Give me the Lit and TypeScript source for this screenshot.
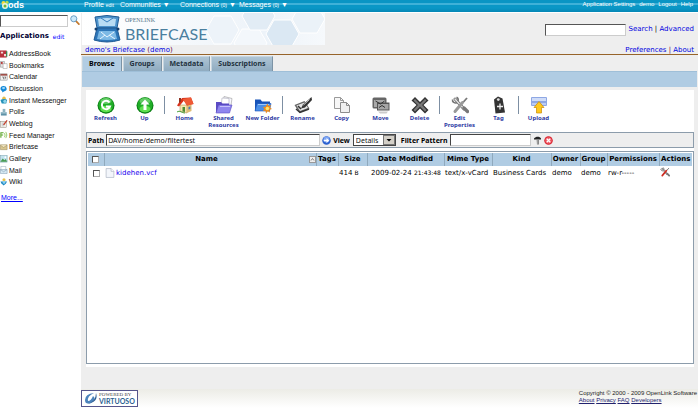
import { LitElement, html, css, svg, TemplateResult } from "lit";
import { customElement } from "lit/decorators.js";

type Art = TemplateResult;

const icon = (art: Art, size = 18, box = 18) =>
  html`<svg width=${size} height=${size} viewBox="0 0 ${box} ${box}" aria-hidden="true">${art}</svg>`;

const greenDisc = svg`
  <ellipse cx="9" cy="9.500" rx="8.500" ry="8.300" fill="#0b7d14"/>
  <circle cx="9" cy="9" r="7.600" fill="#1fae26"/>
  <ellipse cx="9" cy="13" rx="5.500" ry="3.200" fill="#5fe04f"/>
  <ellipse cx="9" cy="5" rx="5.500" ry="3" fill="#7fd780" opacity=".7"/>`;

const folderArt = (dark: string, light: string) => svg`
  <path d="M1 3.500h5.500l1.500 2h8v9.500H1z" fill="${dark}"/>
  <path d="M1 15L3 7.500h14L15.500 15z" fill="${light}" stroke="${dark}" stroke-width=".6"/>`;

const wrenchArt = (handle: string) => svg`
  <path d="M4 3l9 10" stroke="#666" stroke-width="3" stroke-linecap="round"/>
  <path d="M4 3l9 10" stroke="#e4e4e4" stroke-width="1.500" stroke-linecap="round"/>
  <path d="M1.500 3.500a3 3 0 0 0 4.500 3M5.500 1.200a3 3 0 0 1 1.500 4" fill="none" stroke="#777" stroke-width="1.600"/>
  <path d="M16 2l-4 4.500" stroke="#777" stroke-width="1.800"/>
  <path d="M11.500 6.500L4 15.500" stroke="${handle}" stroke-width="3" stroke-linecap="round"/>
  <path d="M13 12l3.500 3.500" stroke="#777" stroke-width="3.400" stroke-linecap="round"/>`;

const art: Record<string, Art> = {
  refresh: svg`${greenDisc}<path d="M12.500 6.500A4.200 4.200 0 1 0 13 10.500H9" fill="none" stroke="#fff" stroke-width="2"/>`,
  up: svg`${greenDisc}<path d="M9 3.500l4.500 5h-3v5.500H7.500V8.500h-3z" fill="#fff"/>`,
  home: svg`
    <path d="M4 9v6.500l7 1.500V9z" fill="#f7e6b0" stroke="#a57b3c" stroke-width=".5"/>
    <path d="M11 9v8l4.500-2V8.500z" fill="#e0bd74"/>
    <path d="M1 9.500L6 2l9-.5 2.500 6.500-6.500 1.500-3-5-5 6z" fill="#d8311b"/>
    <path d="M6.500 3l4.500 6.500 6.500-1.500L15 1.500z" fill="#ef5a35"/>
    <path d="M6.500 11h2.500v5l-2.500-.5z" fill="#4d8b35"/><path d="M12.500 11l1.800-.5v2.500l-1.800.6z" fill="#4c79b8"/>
    <path d="M3 2h2v3.500L3 7z" fill="#8d3222"/><path d="M1 16c3-2 5 1 8 1" fill="none" stroke="#4aa23c"/>`,
  shared: svg`
    <path d="M9 .5l8 2-1.500 10-8-2z" fill="#f8f8ff" stroke="#999" stroke-width=".6"/>
    <path d="M7 2l7 .5v9H6z" fill="#fff" stroke="#aab" stroke-width=".6"/>
    <path d="M1 6h5l1.500 1.500H14V16H1z" fill="#5b4bc4"/>
    <path d="M1 17L3.500 9H17l-2.500 8z" fill="#8f86ee" stroke="#5b4bc4" stroke-width=".6"/><path d="M5 10.500h10" stroke="#c6c2fb"/>`,
  newFolder: svg`
    ${folderArt("#1753b8", "#4a8fe8")}<path d="M4 8.500h11" stroke="#9cc7f8"/>
    <path d="M13.500 7.500l1 2.500 2.500-1-1 2.500 2 1.500-2.500.8.5 2.700-2.300-1.300-1.700 2.300-.5-2.700-2.600.2 1.600-2.200-1.800-1.800 2.600-.2z" fill="#f08c1c"/>
    <circle cx="13.400" cy="12.500" r="1.800" fill="#ffe56a"/>`,
  rename: svg`
    <path d="M.5 9l10-4 5 7.500-10 4.500z" fill="#666"/><path d="M2.500 9.500l8-3 3.500 5.500-8 3z" fill="#e4e4e4"/>
    <path d="M17.500 1L9 8.500l-2 4 4-1L18 4z" fill="#333"/><path d="M15.500 3.500l-6 5.500" stroke="#ccc"/>
    <path d="M4 10l3 3M2 13l4 3.500 9-3.500" fill="none" stroke="#333" stroke-width="1.500"/>`,
  copy: svg`
    <path d="M1.500 1.500h6l3 3v8h-9z" fill="#f7f7f7" stroke="#9a9a9a"/><path d="M7.500 1.500v3h3" fill="none" stroke="#9a9a9a"/>
    <path d="M7.500 6.500h6l3 3v7h-9z" fill="#f0f0f0" stroke="#8c8c8c"/><path d="M13.500 6.500v3h3" fill="none" stroke="#8c8c8c"/>`,
  move: svg`
    <rect x=".5" y="1.500" width="14" height="11" rx="1.500" fill="#666"/><path d="M2 4h11v7H2z" fill="#aaa"/>
    <path d="M5 6.500h12.500v8H5z" fill="#555"/><path d="M6 8h10.500v5.500H6z" fill="#a5a5a5"/>
    <path d="M3.500 5l5 3 4-3M7 11.500l3-2 3 2" fill="none" stroke="#333"/><path d="M6 15.500h10l-1.500 2H8z" fill="#ccc"/>`,
  delete: svg`
    <path d="M4 1L9 6l5-5 3.500 3.500L12.500 9l5 5-3.500 3.500-5-5-5 5L.500 14l5-5-5-4.500z" fill="#333"/>
    <path d="M4 3l5 5 5-5 1.500 1.500L11 9l4.500 5-1.500 1.500-5-5-5 5L2.500 14 7 9 2.500 4.500z" fill="#777"/>`,
  edit: wrenchArt("#999"),
  tag: svg`
    <path d="M4 3.500L8 .5l4.500 2L15 16.500l-9.500 1z" fill="#333"/><circle cx="8.300" cy="3.600" r="1.400" fill="#ddd"/>
    <path d="M10 7.500v6M7 10.500h6" stroke="#eee" stroke-width="1.300"/>`,
  upload: svg`
    <rect x="1" y="1" width="16" height="9" rx="1" fill="#8ea7e4"/><rect x="2" y="2" width="14" height="3" fill="#cfdcf8"/>
    <path d="M2 8h14" stroke="#e8efff"/><path d="M9 5.500l5 6h-2.500V17h-5v-5.500H4z" fill="#ffc91c" stroke="#c98a06" stroke-width=".7"/>`,
  tools: wrenchArt("#cc2d22"),
  sheet: svg`<path d="M2 1h9l5 5v11H2z" fill="#f3f6fb" stroke="#9ba5b5"/><path d="M11 1v5h5" fill="#fff" stroke="#9ba5b5"/>`,
  go: svg`<circle cx="9" cy="9" r="8.500" fill="#2d62d0"/><circle cx="9" cy="7" r="6" fill="#7ea6f3"/>
    <path d="M3.500 7.500H9V4l5.500 5L9 14v-3.500H3.500z" fill="#fff"/>`,
  funnel: svg`<path d="M2 5c4-5 12-4 14 0v2H2z" fill="#222"/><path d="M7 7h5v10H8z" fill="#888"/><path d="M8 8v8" stroke="#ddd"/>`,
  cancel: svg`<circle cx="9" cy="9" r="8.500" fill="#d71c28"/><circle cx="9" cy="9" r="6.500" fill="#f0606a"/>
    <path d="M5.500 5.500l7 7M12.500 5.500l-7 7" stroke="#fff" stroke-width="2.600"/>`,
  lens: svg`<path d="M10.500 10.500L16 16.500" stroke="#c47a2e" stroke-width="3" stroke-linecap="round"/>
    <circle cx="6.800" cy="6.800" r="5.500" fill="#cdeafb" stroke="#5b93bd" stroke-width="1.600"/>`,
  AddressBook: svg`<rect width="15" height="16" y="1" fill="#b8323a"/><path d="M2 4h5v4H2zM9 9h5v5H9z" fill="#f3dada"/><path d="M15 3v12" stroke="#3b8b52" stroke-width="3"/>`,
  Bookmarks: svg`<path d="M1 1h9v13H1z" fill="#e4e4e4" stroke="#777"/><path d="M7 6h9v11H7z" fill="#fff" stroke="#888"/><path d="M2 2h4v6L4 6 2 8z" fill="#b83a3a"/>`,
  Calendar: svg`<rect x="1" y="2" width="15" height="14" fill="#f2f2f2" stroke="#777"/><path d="M1 2h15v4H1z" fill="#a0504a"/><path d="M5 9h3v5M10 9h3l-2 5" fill="none" stroke="#555" stroke-width="1.500"/>`,
  Discussion: svg`<path d="M1 8a7 6 0 1 1 9 6l-5 3v-3A7 6 0 0 1 1 8z" fill="#1389d8"/><ellipse cx="8" cy="7" rx="3.500" ry="2.500" fill="#9fd7fa"/>`,
  "Instant Messenger": svg`<circle cx="9" cy="5" r="4" fill="#e6bd4a"/><path d="M1 9c4-3 12-3 15 0l-2 8H4z" fill="#2491b9"/><circle cx="11" cy="12" r="3.500" fill="#8fd5ea"/>`,
  Polls: svg`<path d="M2 9h13v8H2z" fill="#5f93a8"/><path d="M6 2h6v8H6z" fill="#8db3c1"/><path d="M1 11h15" stroke="#c5dde5" stroke-width="2"/>`,
  Weblog: svg`<rect x="1" y="3" width="13" height="14" fill="#f1eee6" stroke="#857f72"/><path d="M4 7h7M4 10h7M4 13h5" stroke="#8aa0b8"/><path d="M16 1L8 11" stroke="#c8432e" stroke-width="3"/>`,
  "Feed Manager": svg`<path d="M2 15V4h6M2 9h5" fill="none" stroke="#5aa52c" stroke-width="2.500"/><path d="M10 5q3 4 0 9M13 2q5 7 0 14" fill="none" stroke="#82c24d" stroke-width="1.800"/>`,
  Briefcase: svg`<path d="M1 4h15v11H1z" fill="#d8c690" stroke="#8b7844"/><path d="M1 5l7 5 8-5" fill="#f2e9c8" stroke="#8b7844"/>`,
  Gallery: svg`<rect x="1" y="1" width="15" height="15" fill="#c2e2ee" stroke="#6e98a6"/><path d="M1 15l5-7 4 4 3-3 3 6z" fill="#4a9b52"/><circle cx="12" cy="5" r="2" fill="#fff"/>`,
  Mail: svg`<path d="M2 1h11v9H2z" fill="#fff" stroke="#7e9bb0"/><path d="M1 8h15v9H1z" fill="#d6e8f2" stroke="#6c8ca3"/><path d="M1 8l7 5 8-5" fill="none" stroke="#6c8ca3"/>`,
  Wiki: svg`<circle cx="9" cy="4" r="3.500" fill="#e7bf4c"/><path d="M1 8h15l-3 5-5 4-5-5z" fill="#1e88c1"/><circle cx="9" cy="10" r="3" fill="#8bd0f1"/>`,
};

const apps = [
  "AddressBook", "Bookmarks", "Calendar", "Discussion", "Instant Messenger", "Polls",
  "Weblog", "Feed Manager", "Briefcase", "Gallery", "Mail", "Wiki",
];

const tools: [string, string][][] = [
  [["refresh", "Refresh"], ["up", "Up"]],
  [["home", "Home"], ["shared", "Shared Resources"], ["newFolder", "New Folder"]],
  [["rename", "Rename"], ["copy", "Copy"], ["move", "Move"], ["delete", "Delete"]],
  [["edit", "Edit Properties"], ["tag", "Tag"]],
  [["upload", "Upload"]],
];

@customElement("app-topbar")
class AppTopbar extends LitElement {
  static styles = css`
    :host {
      display: flex; align-items: flex-start; height: 12px; color: #fff;
      font: 7px/9px "Liberation Sans", Arial, sans-serif;
      background: linear-gradient(#0a95c4 0 3px, #3fb1d8 3px 5px, #0a97c6 5px 8px, #0587b6 12px);
    }
    a { color: inherit; text-decoration: none; }
    .brand { width: 84px; height: 11px; flex: none; }
    .brand svg { display: block; }
    .menu { display: flex; flex: 1; }
    .item { white-space: nowrap; }
    .first { width: 36px; }
    .second { width: 60px; }
    .third { width: 59px; }
    .small { font-size: 5px; }
    .right { display: flex; gap: 4px; font-size: 6px; padding-right: 5px; }
  `;
  render() {
    return html`
      <a class="brand" href="#" aria-label="ods">
        <svg width="26" height="11" viewBox="0 0 26 11">
          <circle cx="3.500" cy="3" r="2" fill="#f5dc3c"/><circle cx="7" cy="2.300" r="1.600" fill="#b8dc4e"/>
          <circle cx="5" cy="6" r="3" fill="#e9f4e0"/><circle cx="5" cy="6" r="1.500" fill="#6fb63c"/>
          <text x="8" y="8" font-family="Liberation Sans, sans-serif" font-weight="bold" font-size="9" fill="#fff">ods</text>
        </svg>
      </a>
      <nav class="menu">
        <span class="item first"><a href="#">Profile</a> <a class="small" href="#">edit</a></span>
        <a class="item second" href="#">Communities ▼</a>
        <a class="item third" href="#">Connections <span class="small">(0)</span> ▼</a>
        <a class="item" href="#">Messages <span class="small">(0)</span> ▼</a>
      </nav>
      <nav class="right">
        <a href="#">Application Settings</a><a href="#">demo</a><a href="#">Logout</a><a href="#">Help</a>
      </nav>`;
  }
}

@customElement("app-sidebar")
class AppSidebar extends LitElement {
  static styles = css`
    :host { display: block; width: 80px; flex: none; font: 7px/9px "Liberation Sans", Arial, sans-serif; }
    a { color: #00f; }
    svg { display: block; }
    .search { display: flex; align-items: flex-start; gap: 2px; padding-top: 3px; }
    .search input {
      width: 68px; height: 12px; box-sizing: border-box; padding: 0 1px; font: inherit;
      border: 1px solid; border-color: #555 #ccc #ccc #555; border-radius: 0; background: #fff;
    }
    .search button { padding: 0; border: 0; background: none; }
    .title { display: flex; gap: 4px; margin: 4px 0 0; font: bold 7px/11px "DejaVu Sans", Verdana, sans-serif; color: #003; }
    .title a { font-size: 6px; text-decoration: none; font-weight: normal; }
    .apps { list-style: none; margin: 7px 0 4px; padding: 0; display: grid; grid-auto-rows: 1fr; height: 140px; }
    .apps a { display: flex; align-items: center; gap: 1px; color: #111; text-decoration: none; }
    .more { margin-left: 1px; }
  `;
  render() {
    return html`
      <form class="search" role="search">
        <input type="text" aria-label="Search applications" />
        <button type="button" aria-label="Search">${icon(art.lens, 10)}</button>
      </form>
      <h2 class="title">Applications <a href="#">edit</a></h2>
      <ul class="apps">
        ${apps.map((name) => html`<li><a href="#">${icon(art[name], 8)}<span>${name}</span></a></li>`)}
      </ul>
      <a class="more" href="#">More...</a>`;
  }
}

@customElement("app-banner")
class AppBanner extends LitElement {
  static styles = css`
    :host { display: block; font: 7px/9px "DejaVu Sans", Verdana, sans-serif; border-bottom: 1px solid #96632a; }
    a { color: #0000e0; text-decoration: none; }
    .row { display: flex; justify-content: space-between; }
    .logo { display: block; margin-left: 1px; }
    .search { display: flex; align-items: center; gap: 3px; height: 33px; padding-right: 4px; }
    .search input {
      width: 81px; height: 12px; box-sizing: border-box; font: inherit; padding: 0 1px;
      border: 1px solid; border-color: #555 #ccc #ccc #555; border-radius: 0; background: #fff;
    }
    .crumbs { height: 8px; padding: 0 4px 0 4px; color: #604; line-height: 8px; }
  `;
  render() {
    const hex = (x: number, y: number, fill: string) =>
      svg`<path d="M${x} ${y}l8-14h17l8 14-8 14h-17z" fill="${fill}" stroke="#fff"/>`;
    return html`
      <div class="row">
        <svg class="logo" width="243" height="32" viewBox="0 0 243 32" role="img" aria-label="OpenLink Briefcase">
          <defs>
            <linearGradient id="fade"><stop offset="0" stop-color="#fff"/><stop offset=".75" stop-color="#edf3f9"/><stop offset="1" stop-color="#f6f9fc"/></linearGradient>
          </defs>
          <rect width="243" height="32" fill="url(#fade)"/>
          ${hex(124, 17, "#edf3f9")}${hex(152, 30, "#f3f7fb")}${hex(160, 3, "#e2ecf5")}${hex(184, 21, "#dbe8f3")}${hex(210, 6, "#ebf2f8")}
          <path d="M13 4q12-3 24 0l-2 11H15z" fill="#4d93cc" stroke="#1f5a94"/>
          <path d="M16 6q9-2 18 0l-1 7H17z" fill="#b8dcf4"/>
          <path d="M15 15h20l3 12q-13 4-26 0z" fill="#2d76b8" stroke="#1f5a94"/>
          <path d="M17 18h16l2 8q-10 2-20 0z" fill="#7db9e5"/>
          <path d="M19 19l6 5 7-5M18 26l5-4M33 26l-6-4" fill="none" stroke="#e8f5ff"/>
          <path d="M19 5l6 4 6-4" fill="none" stroke="#3a7fbd"/>
          <circle cx="14" cy="16" r="1.500" fill="#123f70"/><circle cx="36" cy="16" r="1.500" fill="#123f70"/>
          <text x="43" y="9" font-family="Liberation Serif, serif" font-size="6" fill="#55738b">OPENLINK</text>
          <text x="43" y="27" font-family="Lato, sans-serif" font-size="16" fill="#4a7f9f">BRIEFCASE</text>
        </svg>
        <form class="search" role="search">
          <input type="text" aria-label="Search" />
          <span><a href="#">Search</a> | <a href="#">Advanced</a></span>
        </form>
      </div>
      <div class="row crumbs">
        <span><a href="#">demo's Briefcase</a> (<a href="#">demo</a>)</span>
        <span><a href="#">Preferences</a> | <a href="#">About</a></span>
      </div>`;
  }
}

@customElement("app-files")
class AppFiles extends LitElement {
  static styles = css`
    :host { display: flex; flex-direction: column; flex: 1; margin: 1px 1px 0; font: 7px/9px "DejaVu Sans", Verdana, sans-serif; }
    svg { display: block; }
    button { font: inherit; padding: 0; border: 0; background: none; }
    .tabs { display: flex; gap: 1px; border-bottom: 1px solid #9fbfd8; }
    .tab {
      height: 15px; padding: 0 6px; font: bold 7px/14px "Noto Sans", sans-serif; color: #24333f;
      background: linear-gradient(#aec4d4, #8fabc0); border: 1px solid; border-color: #c5d5e0 #7c93a5 #8fabc0 #c5d5e0;
      border-bottom: 0;
    }
    .tab.on { background: #b2cde3; color: #000; }
    .strip { height: 15px; background: #b0cce3; }
    .panel { display: flex; flex-direction: column; flex: 1; margin: 3px 3px 0 4px; background: #fff; padding: 6px 0 3px; }
    .toolbar { display: flex; height: 36px; }
    .group { display: flex; }
    .group + .group { border-left: 1px solid #8494a6; border-image: linear-gradient(#7d8fa3 0 18px, transparent 18px) 1; }
    .tool {
      display: flex; flex-direction: column; align-items: center; gap: 1px; width: 39px;
      font: bold 6px/7px "Noto Sans", sans-serif; color: #2c3aa4;
    }
    .pathbar {
      display: flex; align-items: center; gap: 2px; height: 16px; box-sizing: border-box; padding: 0 1px;
      border: 1px solid #8c9cab; background: #eee; font: 7px/9px "Noto Sans", sans-serif;
    }
    .pathbar label { font-weight: bold; white-space: nowrap; }
    .pathbar input, .pathbar select {
      height: 12px; box-sizing: border-box; border: 1px solid; border-color: #444 #ccc #ccc #444;
      border-radius: 0; font: inherit; padding: 0 1px; background: #fff; color: #111; margin: 0;
    }
    .path { width: 214px; }
    .pattern { width: 81px; }
    .pick { position: relative; margin: 0 3px 0 1px; }
    .pick select { appearance: none; display: block; width: 43px; padding: 0 2px; border-color: #444; }
    .pick svg { position: absolute; right: 1px; top: 1px; pointer-events: none; }
    .list { flex: 1; margin-top: 3px; border: 1px solid #8c9cab; padding: 1px; }
    table { width: 100%; table-layout: fixed; border-collapse: collapse; }
    th, td { padding: 0; height: 13px; white-space: nowrap; }
    th { background: #b0cce3; border-right: 1px solid #8fa9bd; text-align: center; }
    th:last-child { border-right: 0; }
    td { height: 14px; padding-left: 1px; }
    td a { color: #1a00ee; text-decoration: none; }
    .file { display: flex; align-items: center; gap: 1px; }
    .head { display: flex; align-items: center; }
    .head span { flex: 1; }
    .sort { width: 7px; height: 7px; background: #eee; border: 1px solid #999; box-sizing: border-box; }
    .tiny { font-size: 6px; }
    .center { text-align: center; }
    input[type="checkbox"] {
      appearance: none; display: block; margin: 0 auto; width: 7px; height: 7px; background: #fff;
      border: 1px solid; border-color: #555 #aaa #aaa #555;
    }
    .c-check { width: 16px; } .c-tags { width: 22px; } .c-size { width: 29px; } .c-date { width: 77px; }
    .c-mime { width: 48px; } .c-kind { width: 59px; } .c-owner { width: 29px; } .c-group { width: 27px; }
    .c-perm { width: 52px; } .c-act { width: 33px; }
  `;
  render() {
    return html`
      <nav class="tabs">
        ${["Browse", "Groups", "Metadata", "Subscriptions"].map(
          (t, i) => html`<button class="tab ${i === 0 ? "on" : ""}">${t}</button>`,
        )}
      </nav>
      <div class="strip"></div>
      <div class="panel">
        <div class="toolbar">
          ${tools.map(
            (g) => html`<div class="group">
              ${g.map(([key, label]) => html`<button class="tool">${icon(art[key], 18)}<span>${label}</span></button>`)}
            </div>`,
          )}
        </div>
        <form class="pathbar">
          <label for="path">Path</label>
          <input class="path" id="path" type="text" .value=${"DAV/home/demo/filtertest"} />
          <button type="button" aria-label="Go">${icon(art.go, 9)}</button>
          <label for="view">View</label>
          <span class="pick">
            <select id="view"><option>Details</option></select>
            <svg width="12" height="10" viewBox="0 0 12 10" aria-hidden="true">
              <rect x=".5" y=".5" width="11" height="9" fill="#d4d0c8" stroke="#777"/><path d="M3.500 4h5L6 6.500z"/>
            </svg>
          </span>
          <label for="pattern">Filter Pattern</label>
          <input class="pattern" id="pattern" type="text" />
          <button type="button" aria-label="Filter">${icon(art.funnel, 9)}</button>
          <button type="button" aria-label="Clear filter">${icon(art.cancel, 9)}</button>
        </form>
        <div class="list">
          <table>
            <colgroup>
              <col class="c-check" /><col /><col class="c-tags" /><col class="c-size" /><col class="c-date" /><col class="c-mime" />
              <col class="c-kind" /><col class="c-owner" /><col class="c-group" /><col class="c-perm" /><col class="c-act" />
            </colgroup>
            <thead>
              <tr>
                <th><input type="checkbox" aria-label="Select all" /></th>
                <th><div class="head"><span>Name</span>
                  <button class="sort" aria-label="Sort by name"><svg width="5" height="5" viewBox="0 0 5 5"><path d="M1 3.500L2.500 1.500 4 3.500" fill="none" stroke="#666" stroke-width=".8"/></svg></button></div></th>
                ${["Tags", "Size", "Date Modified", "Mime Type", "Kind", "Owner", "Group", "Permissions", "Actions"].map(
                  (h) => html`<th>${h}</th>`,
                )}
              </tr>
            </thead>
            <tbody>
              <tr>
                <td><input type="checkbox" aria-label="Select kidehen.vcf" /></td>
                <td><a class="file" href="#">${icon(art.sheet, 10)}kidehen.vcf</a></td>
                <td></td>
                <td>414 <span class="tiny">B</span></td>
                <td class="center">2009-02-24 <span class="tiny">21:43:48</span></td>
                <td>text/x-vCard</td>
                <td>Business Cards</td>
                <td>demo</td>
                <td>demo</td>
                <td>rw-r-----</td>
                <td><button aria-label="Edit properties of kidehen.vcf">${icon(art.tools, 10)}</button></td>
              </tr>
            </tbody>
          </table>
        </div>
      </div>`;
  }
}

@customElement("app-footer")
class AppFooter extends LitElement {
  static styles = css`
    :host {
      display: flex; justify-content: space-between; align-items: flex-start; height: 18px; padding-top: 1px;
      background: linear-gradient(#ecece6, #fff); font: 6px/7px "Liberation Sans", Arial, sans-serif; color: #222;
    }
    a { color: #22226e; }
    svg { display: block; }
    .legal { padding-right: 1px; }
  `;
  render() {
    return html`
      <a href="#" aria-label="Powered by Virtuoso">
        <svg width="57" height="17" viewBox="0 0 57 17">
          <rect x=".5" y=".5" width="56" height="16" fill="#fff" stroke="#55558c"/>
          <path d="M4 10q0-6 9-7-7 3-6 8 3 0 5-5 4 3-2 7-6 2-6-3z" fill="#4b83bc"/>
          <path d="M6 14Q15 12 15 3q3 9-9 11z" fill="#27588f"/>
          <text x="18" y="6" font-family="Liberation Serif, serif" font-size="5" fill="#444">POWERED BY</text>
          <text x="18" y="14" font-family="Lato, sans-serif" font-weight="bold" font-size="7" fill="#2b5f92">VIRTUOSO</text>
        </svg>
      </a>
      <div class="legal">
        Copyright © 2000 - 2009 OpenLink Software<br />
        <a href="#">About</a> <a href="#">Privacy</a> <a href="#">FAQ</a> <a href="#">Developers</a>
      </div>`;
  }
}

@customElement("app-root")
class AppRoot extends LitElement {
  static styles = css`
    :host { display: flex; flex-direction: column; min-height: 100vh; box-sizing: border-box; padding: 0 2px 9px 0; background: #fff; }
    .body { display: flex; flex: 1; }
    .main { display: flex; flex-direction: column; flex: 1; min-width: 0; margin: 1px 0 0 1px; }
    .work { display: flex; flex-direction: column; flex: 1; background: #eee; padding-bottom: 22px; }
  `;
  render() {
    return html`
      <app-topbar></app-topbar>
      <div class="body">
        <app-sidebar></app-sidebar>
        <main class="main">
          <div class="work">
            <app-banner></app-banner>
            <app-files></app-files>
          </div>
          <app-footer></app-footer>
        </main>
      </div>`;
  }
}
